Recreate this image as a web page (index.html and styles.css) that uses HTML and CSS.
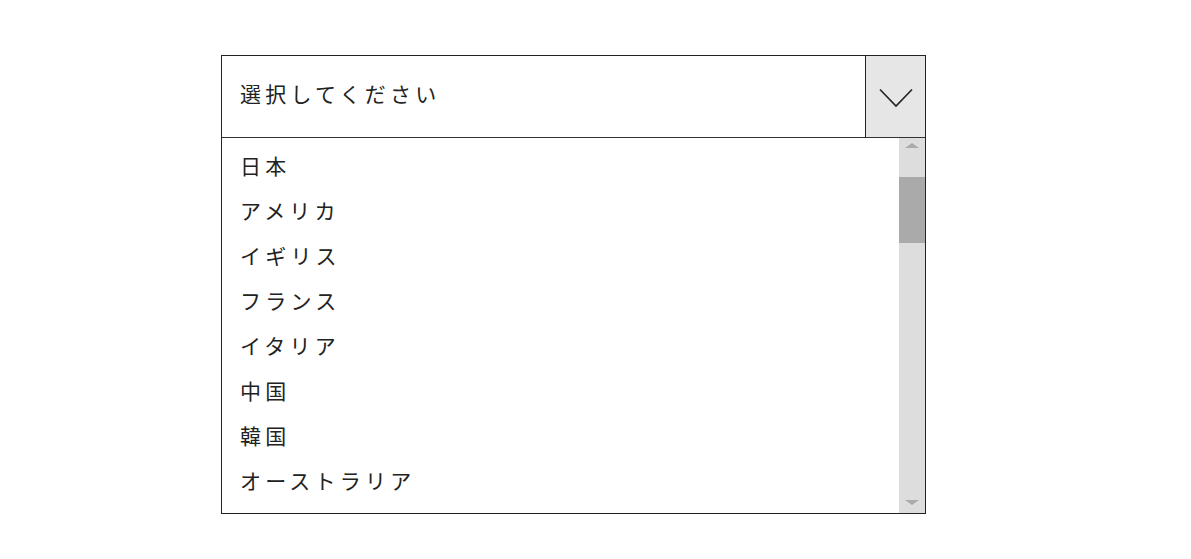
FILE: index.html
```html
<!DOCTYPE html>
<html lang="ja">
<head>
  <meta charset="UTF-8">
  <meta name="viewport" content="width=device-width, initial-scale=1.0">
  <title>セレクト</title>
  <link rel="stylesheet" href="styles.css">
</head>
<body>
  <div class="select">
    <div class="select-head">
      <div class="select-label">選択してください</div>
      <div class="select-btn">
        <svg width="34" height="20" viewBox="0 0 34 20">
          <polyline points="1,1.5 17,18 33,1.5" fill="none" stroke="#222" stroke-width="1.6"/>
        </svg>
      </div>
    </div>
    <div class="select-body">
      <ul class="options">
        <li>日本</li>
        <li>アメリカ</li>
        <li>イギリス</li>
        <li>フランス</li>
        <li>イタリア</li>
        <li>中国</li>
        <li>韓国</li>
        <li>オーストラリア</li>
      </ul>
      <div class="scrollbar">
        <div class="arrow-up"></div>
        <div class="track">
          <div class="thumb"></div>
        </div>
        <div class="arrow-down"></div>
      </div>
    </div>
  </div>
</body>
</html>
```

FILE: styles.css
```css
body {
  margin: 0;
  padding: 55px 0 0 221px;
  background-color: #fff;
  color: #222;
  font-family: "Noto Sans CJK JP", "Noto Sans", sans-serif;
}

.select {
  width: 703px;
  border: 1px solid #222;
}

.select-head {
  display: flex;
  height: 81px;
  border-bottom: 1px solid #333;
}

.select-label {
  flex: 1;
  display: flex;
  align-items: center;
  padding: 0 0 8px 18px;
  font-size: 21px;
  letter-spacing: 0.2em;
}

.select-btn {
  width: 59px;
  display: flex;
  align-items: center;
  justify-content: center;
  background-color: #e6e6e6;
  border-left: 1px solid #222;
}

.select-btn svg {
  margin-top: 2px;
}

.select-body {
  display: flex;
  height: 375px;
}

.options {
  flex: 1;
  list-style: none;
  margin: 0;
  padding: 5px 0 0 18px;
}

.options li {
  height: 45px;
  line-height: 45px;
  font-size: 21px;
  letter-spacing: 0.2em;
}

.scrollbar {
  width: 26px;
  display: flex;
  flex-direction: column;
  align-items: center;
  background-color: #dcdddc;
}

.arrow-up,
.arrow-down {
  width: 0;
  height: 0;
  border-left: 7px solid transparent;
  border-right: 7px solid transparent;
}

.arrow-up {
  margin-top: 5px;
  border-bottom: 5px solid #a9aaa9;
}

.arrow-down {
  margin-bottom: 8px;
  border-top: 5px solid #a9aaa9;
}

.track {
  flex: 1;
  width: 100%;
  padding-top: 29px;
}

.thumb {
  height: 66px;
  background-color: #a9aaa9;
}
```
